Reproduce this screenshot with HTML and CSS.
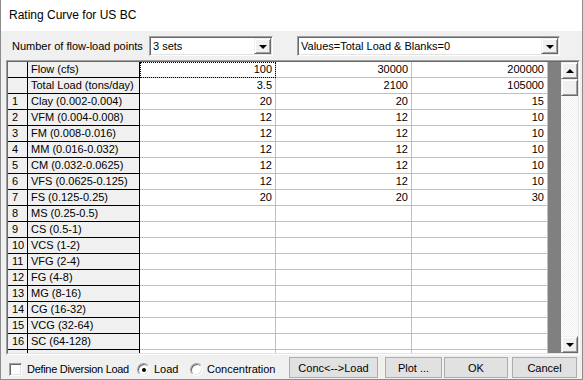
FILE: index.html
```html
<!DOCTYPE html>
<html lang="en">

<head>
    <meta charset="utf-8" />
    <title>Rating Curve for US BC</title>
    <link rel="stylesheet" href="styles.css">
</head>

<body>
    <div class="window">
        <div class="titlebar">Rating Curve for US BC</div>

        <div class="toprow">
            <span class="label">Number of flow-load points</span>
            <div class="combo combo-sets">
                <span class="combo-text">3 sets</span>
                <span class="combo-btn"><span class="tri-down"></span></span>
            </div>
            <div class="combo combo-values">
                <span class="combo-text">Values=Total Load &amp; Blanks=0</span>
                <span class="combo-btn"><span class="tri-down"></span></span>
            </div>
        </div>

        <div class="gridbox">
            <div class="gridinner">
                <div class="grid">
                    <div class="row"><div class="num"></div><div class="name">Flow (cfs)</div><div class="val focus">100</div><div class="val">30000</div><div class="val">200000</div></div>
                    <div class="row"><div class="num"></div><div class="name">Total Load (tons/day)</div><div class="val">3.5</div><div class="val">2100</div><div class="val">105000</div></div>
                    <div class="row"><div class="num">1</div><div class="name">Clay (0.002-0.004)</div><div class="val">20</div><div class="val">20</div><div class="val">15</div></div>
                    <div class="row"><div class="num">2</div><div class="name">VFM (0.004-0.008)</div><div class="val">12</div><div class="val">12</div><div class="val">10</div></div>
                    <div class="row"><div class="num">3</div><div class="name">FM (0.008-0.016)</div><div class="val">12</div><div class="val">12</div><div class="val">10</div></div>
                    <div class="row"><div class="num">4</div><div class="name">MM (0.016-0.032)</div><div class="val">12</div><div class="val">12</div><div class="val">10</div></div>
                    <div class="row"><div class="num">5</div><div class="name">CM (0.032-0.0625)</div><div class="val">12</div><div class="val">12</div><div class="val">10</div></div>
                    <div class="row"><div class="num">6</div><div class="name">VFS (0.0625-0.125)</div><div class="val">12</div><div class="val">12</div><div class="val">10</div></div>
                    <div class="row"><div class="num">7</div><div class="name">FS (0.125-0.25)</div><div class="val">20</div><div class="val">20</div><div class="val">30</div></div>
                    <div class="row"><div class="num">8</div><div class="name">MS (0.25-0.5)</div><div class="val"></div><div class="val"></div><div class="val"></div></div>
                    <div class="row"><div class="num">9</div><div class="name">CS (0.5-1)</div><div class="val"></div><div class="val"></div><div class="val"></div></div>
                    <div class="row"><div class="num">10</div><div class="name">VCS (1-2)</div><div class="val"></div><div class="val"></div><div class="val"></div></div>
                    <div class="row"><div class="num">11</div><div class="name">VFG (2-4)</div><div class="val"></div><div class="val"></div><div class="val"></div></div>
                    <div class="row"><div class="num">12</div><div class="name">FG (4-8)</div><div class="val"></div><div class="val"></div><div class="val"></div></div>
                    <div class="row"><div class="num">13</div><div class="name">MG (8-16)</div><div class="val"></div><div class="val"></div><div class="val"></div></div>
                    <div class="row"><div class="num">14</div><div class="name">CG (16-32)</div><div class="val"></div><div class="val"></div><div class="val"></div></div>
                    <div class="row"><div class="num">15</div><div class="name">VCG (32-64)</div><div class="val"></div><div class="val"></div><div class="val"></div></div>
                    <div class="row"><div class="num">16</div><div class="name">SC (64-128)</div><div class="val"></div><div class="val"></div><div class="val"></div></div>
                    <div class="row"><div class="num"></div><div class="name"></div><div class="val"></div><div class="val"></div><div class="val"></div></div>
                </div>
                <div class="grid-empty"></div>
                <div class="vscroll">
                    <div class="sbtn"><span class="tri-up"></span></div>
                    <div class="sbtn thumb"></div>
                    <div class="track"></div>
                    <div class="sbtn"><span class="tri-down"></span></div>
                </div>
            </div>
        </div>

        <div class="bottomrow">
            <span class="checkbox"></span>
            <span class="opt-label diversion">Define Diversion Load</span>
            <span class="radio checked"></span>
            <span class="opt-label load">Load</span>
            <span class="radio"></span>
            <span class="opt-label">Concentration</span>

            <div class="buttons">
                <button class="btn btn-conc">Conc&lt;--&gt;Load</button>
                <button class="btn btn-plot">Plot ...</button>
                <button class="btn btn-ok">OK</button>
                <button class="btn btn-cancel">Cancel</button>
            </div>
        </div>
    </div>
</body>

</html>
```

FILE: styles.css
```css
* {
    box-sizing: border-box;
}

html {
    font-family: "Liberation Sans", Arial, sans-serif;
    font-size: 11px;
    color: #000;
}

body {
    margin: 0;
    width: 583px;
    height: 380px;
    overflow: hidden;
}

.window {
    width: 583px;
    height: 380px;
    padding: 0 1px 1px 1px;
    background: #f0f0f0;
    box-shadow: inset 1px 0 #8c8c8c, inset -1px 0 #8c8c8c, inset 0 -1px #8c8c8c;
    display: flex;
    flex-direction: column;
}

.titlebar {
    height: 31px;
    line-height: 31px;
    padding-left: 8px;
    background: #fff;
    font-size: 12px;
}

/* top row: label + two combo boxes */
.toprow {
    height: 29px;
    padding: 5px 0 0 11px;
    display: flex;
    align-items: flex-start;
}

.label {
    width: 137px;
    line-height: 20px;
    white-space: nowrap;
}

.combo {
    height: 20px;
    display: flex;
    background: #fff;
    border: 1px solid;
    border-color: #a0a0a0 #fff #fff #a0a0a0;
    box-shadow: inset 1px 1px #696969, inset -1px -1px #e3e3e3;
    padding: 2px;
}

.combo-sets {
    width: 124px;
}

.combo-values {
    width: 263px;
    margin-left: 24px;
}

.combo-text {
    flex: 1;
    line-height: 14px;
    padding-left: 1px;
    white-space: nowrap;
}

.combo-btn {
    width: 17px;
    height: 16px;
    margin: -1px -1px 0 0;
    background: #f0f0f0;
    border: 1px solid;
    border-color: #f0f0f0 #696969 #696969 #f0f0f0;
    box-shadow: inset 1px 1px #fff, inset -1px -1px #a0a0a0;
    display: flex;
    align-items: center;
    justify-content: center;
}

.tri-down,
.tri-up {
    width: 0;
    height: 0;
    border-left: 4px solid transparent;
    border-right: 4px solid transparent;
}

.tri-down {
    border-top: 4px solid #000;
    margin-top: 1px;
}

.tri-up {
    border-bottom: 4px solid #000;
}

/* grid */
.gridbox {
    margin-left: 5px;
    width: 574px;
    height: 295px;
    border: 1px solid;
    border-color: #a0a0a0 #fff #fff #a0a0a0;
}

.gridinner {
    height: 100%;
    border: 1px solid;
    border-color: #696969 #e3e3e3 #e3e3e3 #696969;
    display: flex;
    overflow: hidden;
}

.grid {
    width: 540px;
    height: 291px;
    overflow: hidden;
    background: #fff;
}

.row {
    display: flex;
    height: 16px;
    line-height: 15px;
}

.row > div {
    height: 16px;
    white-space: nowrap;
    overflow: hidden;
}

.num,
.name {
    background: #f0f0f0;
    border-right: 1px solid #000;
    border-bottom: 1px solid #000;
}

.num {
    width: 20px;
    padding-left: 4px;
}

.name {
    width: 112px;
    padding-left: 3px;
}

.val {
    width: 136px;
    text-align: right;
    padding-right: 3px;
    border-right: 1px solid #c0c0c0;
    border-bottom: 1px solid #c0c0c0;
}

.focus {
    outline: 1px dotted #000;
    outline-offset: -1px;
}

.grid-empty {
    width: 13px;
    background: #808080;
}

.vscroll {
    width: 17px;
    display: flex;
    flex-direction: column;
}

.sbtn {
    height: 17px;
    background: #f0f0f0;
    border: 1px solid;
    border-color: #f0f0f0 #696969 #696969 #f0f0f0;
    box-shadow: inset 1px 1px #fff, inset -1px -1px #a0a0a0;
    display: flex;
    align-items: center;
    justify-content: center;
}

.track {
    flex: 1;
    background: repeating-conic-gradient(#f0f0f0 0 25%, #fff 0 50%) 0 0 / 2px 2px;
}

/* bottom row */
.bottomrow {
    height: 23px;
    display: flex;
    align-items: flex-start;
}

.bottomrow > span {
    flex-shrink: 0;
}

.checkbox {
    width: 13px;
    height: 13px;
    margin: 8px 0 0 8px;
    background: #fff;
    border: 1px solid;
    border-color: #a0a0a0 #fff #fff #a0a0a0;
    box-shadow: inset 1px 1px #696969, inset -1px -1px #e3e3e3;
}

.opt-label {
    margin: 7px 0 0 4px;
    line-height: 15px;
    white-space: nowrap;
}

.diversion {
    width: 110px;
    margin-left: 5px;
    letter-spacing: -0.3px;
}

.load {
    width: 36px;
}

.radio {
    width: 13px;
    height: 13px;
    margin-top: 8px;
    border-radius: 50%;
    background: #fff;
    border: 1px solid;
    border-color: #a0a0a0 #fff #fff #a0a0a0;
    box-shadow: inset 1px 1px #696969, inset -1px -1px #e3e3e3;
    display: flex;
    align-items: center;
    justify-content: center;
}

.radio.checked::after {
    content: "";
    width: 4px;
    height: 4px;
    border-radius: 50%;
    background: #000;
}

.buttons {
    margin-left: auto;
    margin-right: 5px;
    display: flex;
    padding-top: 2px;
}

.btn {
    height: 21px;
    padding: 0;
    font-family: "Liberation Sans", Arial, sans-serif;
    font-size: 11px;
    color: #000;
    background: #e1e1e1;
    border: 1px solid #adadad;
}

.btn-conc {
    width: 89px;
}

.btn-plot {
    width: 57px;
    margin-left: 7px;
}

.btn-ok {
    width: 64px;
    margin-left: 2px;
}

.btn-cancel {
    width: 65px;
    margin-left: 4px;
}
```
